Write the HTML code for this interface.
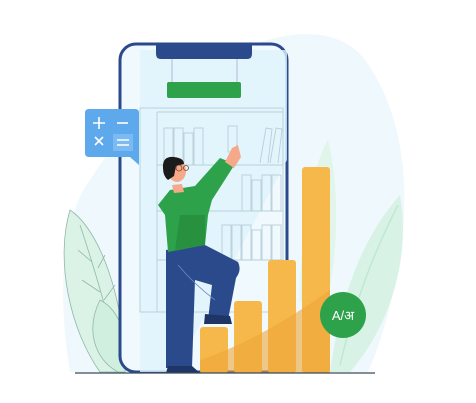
<!DOCTYPE html>
<html><head><style>
html,body{margin:0;padding:0;background:#fff;width:476px;height:403px;overflow:hidden}
svg{display:block}
</style></head><body>
<svg width="476" height="403" viewBox="0 0 476 403" xmlns="http://www.w3.org/2000/svg">
<path d="M70 372 C58 300 60 220 90 180 C115 140 150 100 210 65 C270 30 335 20 365 60 C398 105 410 170 402 240 C394 300 382 340 368 372 Z" fill="#eef8fd"/>
<path d="M330 372 C340 300 360 240 400 195 C410 250 395 320 350 372 Z" fill="#d8f3e6"/>
<path d="M340 365 C355 300 375 250 398 205" stroke="#bfe8d2" stroke-width="1.5" fill="none"/>
<path d="M300 300 C300 240 310 170 328 140 C340 190 340 260 320 330 Z" fill="#e1f5ea"/>
<path d="M100 372 C70 330 55 260 70 210 C100 230 125 300 125 372 Z" fill="#dbf3e6" stroke="#8fb8a8" stroke-width="0.8"/>
<path d="M80 225 C95 270 110 320 120 370 M78 250 L92 262 M105 255 L98 268 M82 280 L100 292 M115 285 L104 300" stroke="#8fb8a8" stroke-width="0.8" fill="none"/>
<path d="M118 372 C95 360 85 330 100 300 C120 310 130 340 125 372 Z" fill="#d0efdf" stroke="#8fb8a8" stroke-width="0.8"/>
<rect x="120" y="44" width="167" height="328" rx="16" fill="#f0f9fe" stroke="#2b4a8c" stroke-width="3"/>
<path d="M140 50 L287 50 L287 160 L175 372 L140 372 Z" fill="#dff2fb" opacity="0.8"/>
<path d="M156 44 L252 44 L252 54 Q252 59 247 59 L161 59 Q156 59 156 54 Z" fill="#2b4a8c"/>
<line x1="172" y1="59" x2="172" y2="82" stroke="#aac" stroke-width="0.8"/>
<line x1="237" y1="59" x2="237" y2="82" stroke="#aac" stroke-width="0.8"/>
<rect x="167" y="82" width="74" height="16" rx="2" fill="#2ea24a"/>
<g stroke="#b8cfd9" stroke-width="0.9" fill="none">
<rect x="140" y="108" width="143" height="204"/>
<line x1="157" y1="112" x2="283" y2="112"/>
<line x1="157" y1="112" x2="157" y2="312"/>
<line x1="157" y1="165" x2="283" y2="165"/>
<line x1="157" y1="211" x2="283" y2="211"/>
<line x1="157" y1="260" x2="283" y2="260"/>
<rect x="164" y="128" width="9" height="37"/><rect x="174" y="128" width="9" height="37"/><rect x="184" y="133" width="9" height="32"/><rect x="194" y="128" width="9" height="37"/>
<rect x="228" y="126" width="9" height="26"/>
<path d="M260 163 L266 128 L272 129 L268 163 M270 163 L276 128 L282 129 L278 163"/>
<rect x="242" y="175" width="9" height="36"/><rect x="252" y="180" width="9" height="31"/><rect x="262" y="175" width="9" height="36"/><rect x="272" y="175" width="9" height="36"/>
<rect x="222" y="225" width="9" height="35"/><rect x="232" y="225" width="9" height="35"/><rect x="242" y="225" width="9" height="35"/><rect x="252" y="230" width="9" height="30"/><rect x="262" y="225" width="9" height="35"/><rect x="272" y="225" width="9" height="35"/>
</g>
<path d="M89 109 L135 109 Q139 109 139 113 L139 165 L130 157 L89 157 Q85 157 85 153 L85 113 Q85 109 89 109 Z" fill="#5ea8ec"/>
<rect x="113" y="134" width="20" height="17" fill="#7bbaf2"/>
<g stroke="#fff" stroke-width="1.6" fill="none">
<path d="M93 123 L105 123 M99 117 L99 129"/>
<path d="M117 123 L128 123"/>
<path d="M95 137 L103 145 M103 137 L95 145"/>
<path d="M117 140 L129 140 M117 145 L129 145"/>
</g>
<rect x="200" y="327" width="28" height="46" rx="3" fill="#f6b84a"/>
<rect x="234" y="301" width="28" height="72" rx="3" fill="#f6b84a"/>
<rect x="268" y="260" width="28" height="113" rx="3" fill="#f6b84a"/>
<rect x="302" y="167" width="28" height="206" rx="3" fill="#f6b84a"/>
<path d="M200 360 Q260 340 330 290 L330 373 L200 373 Z" fill="#eea53a" opacity="0.6"/>
<path d="M166 250 L205 245 L238 262 Q242 270 236 278 L228 320 L208 320 L212 285 L195 280 L192 368 L166 368 Z" fill="#2b4a8c"/>
<path d="M178 265 Q195 285 215 300" stroke="#6b86c4" stroke-width="0.8" fill="none"/>
<path d="M205 314 L230 316 L232 324 L204 324 Z" fill="#1f3566"/>
<path d="M168 366 L192 366 L200 373 L166 373 Z" fill="#1f3566"/>
<path d="M170 190 L195 186 L220 158 L235 164 L212 200 L208 215 L205 245 L168 252 L165 215 L158 205 Z" fill="#2ea24a"/>
<path d="M180 215 L205 215 L205 245 L175 250 Z" fill="#27913f"/>
<path d="M225 162 L232 148 L238 145 L241 157 L234 168 Z" fill="#f6a98a"/>
<path d="M172 185 L182 184 L184 192 L174 193 Z" fill="#f6a98a"/>
<ellipse cx="177" cy="171" rx="9" ry="11" fill="#f6a98a"/>
<path d="M163 168 Q162 156 174 157 Q184 158 184 164 L176 166 L174 176 L168 180 Q163 176 163 168 Z" fill="#1b1b1b"/>
<circle cx="179" cy="168" r="3" fill="none" stroke="#7a4a2a" stroke-width="0.8"/>
<circle cx="186" cy="168" r="2.5" fill="none" stroke="#7a4a2a" stroke-width="0.8"/>
<line x1="75" y1="373" x2="375" y2="373" stroke="#3a4a5a" stroke-width="1.2"/>
<circle cx="343" cy="315" r="23" fill="#2ea24a"/>
<text x="343" y="320" font-family="'Liberation Sans','Noto Sans CJK SC',sans-serif" font-size="13" fill="#fff" text-anchor="middle">A/अ</text>
</svg>
</body></html>
